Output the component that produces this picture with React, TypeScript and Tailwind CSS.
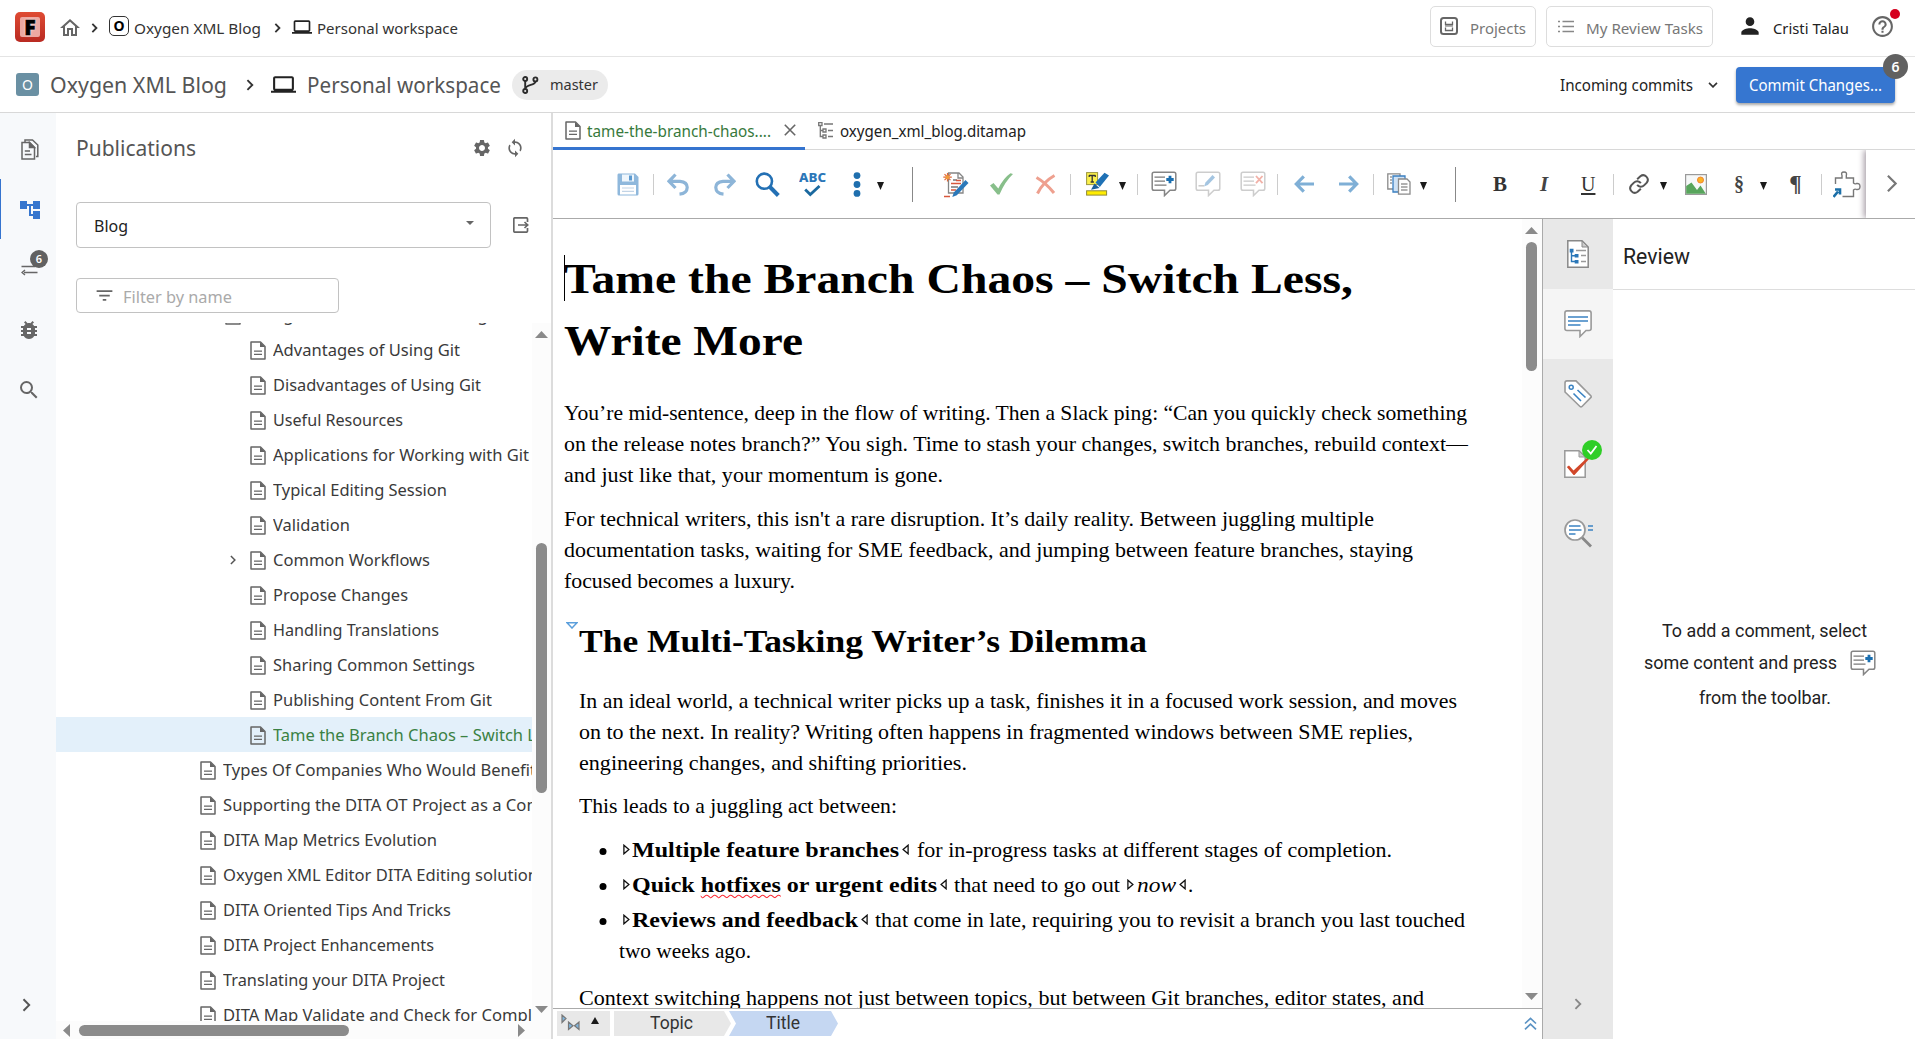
import { useLayoutEffect, useRef, type ReactNode } from "react";
import {
  MdAccountTree,
  MdBugReport,
  MdFilterList,
  MdHelpOutline,
  MdOutlineHome,
  MdLaptop,
  MdPerson,
  MdSearch,
  MdSettings,
  MdSync,
} from "react-icons/md";

/** A single line of text, condensed or expanded to occupy exactly `w` pixels. */
function Fit({ w, className = "", children }: { w: number; className?: string; children: ReactNode }) {
  const inner = useRef<HTMLSpanElement>(null);
  useLayoutEffect(() => {
    const el = inner.current;
    if (!el) return;
    el.style.transform = "none";
    const natural = el.getBoundingClientRect().width;
    if (natural > 0) el.style.transform = `scaleX(${w / natural})`;
  }, [w]);
  return (
    <span className={`inline-block shrink-0 whitespace-nowrap ${className}`} style={{ width: w }}>
      <span ref={inner} className="inline-block origin-left">
        {children}
      </span>
    </span>
  );
}

function Chevron({ className, dir = "right", sw = 2 }: { className: string; dir?: "right" | "down"; sw?: number }) {
  return (
    <svg className={`shrink-0 ${className}`} viewBox={dir === "right" ? "0 0 8 13" : "0 0 13 8"} fill="none" stroke="currentColor" strokeWidth={sw}>
      <path d={dir === "right" ? "M1.2 1.2 6.5 6.5 1.2 11.8" : "M1.2 1.2 6.5 6.5 11.8 1.2"} />
    </svg>
  );
}

function DocIcon({ className = "" }: { className?: string }) {
  return (
    <svg className={`h-[19px] w-[16px] shrink-0 text-[#666] ${className}`} viewBox="0 0 16 19" fill="none" stroke="currentColor" strokeWidth="1.5">
      <path d="M1 1H10.5L15 5.5V18H1Z" strokeLinejoin="round" />
      <path d="M10 1V6H15Z" fill="currentColor" stroke="none" />
      <path d="M4 10.2H12M4 13.4H12" strokeWidth="1.3" />
    </svg>
  );
}

function FilesIcon() {
  return (
    <svg className="h-[21px] w-[18px]" viewBox="0 0 18 21" fill="none" stroke="#666" strokeWidth="1.5">
      <path d="M1 3.5H8.5L13.5 8.5V20H1Z" />
      <path d="M8.5 3.5V8.5H13.5Z" fill="#666" />
      <path d="M3.8 12H9M3.8 15.5H10.5" strokeWidth="1.3" />
      <path d="M4 3V1H11.5L16.8 6V17.5H15" />
    </svg>
  );
}

function BranchIcon() {
  return (
    <svg className="h-[18px] w-[17px]" viewBox="0 0 17 18" fill="none" stroke="#2b2b2b" strokeWidth="1.9">
      <circle cx="3.2" cy="3" r="2" />
      <circle cx="13.4" cy="3.4" r="2" />
      <circle cx="3.2" cy="15" r="2" />
      <path d="M3.2 5V13M13.4 5.4C13.4 9.6 3.6 8 3.2 13" />
    </svg>
  );
}

function Bubble({ kind, soft = false }: { kind: "plus" | "edit" | "del"; soft?: boolean }) {
  return (
    <svg className={soft ? "h-[26px] w-[26px] opacity-40" : "h-[26px] w-[26px]"} viewBox="0 0 26 26" fill="none">
      <path d="M3 1.2H23Q24.8 1.2 24.8 3V17.5Q24.8 19.3 23 19.3H19L13.5 24.6V19.3H3Q1.2 19.3 1.2 17.5V3Q1.2 1.2 3 1.2Z" stroke="#858585" strokeWidth="1.5" fill="#fff" />
      {kind !== "edit" && <path d="M3.5 6.2H14M3.5 10.2H14M3.5 14.2H15.5" stroke="#7a7a7a" strokeWidth="1.3" />}
      {kind === "edit" && <path d="M3.5 14.8H9" stroke="#7a7a7a" strokeWidth="1.5" />}
      {kind === "plus" && <path d="M19 4.8V12.2M15.3 8.5H22.7" stroke="#1b6fb0" strokeWidth="2.8" />}
      {kind === "edit" && <path d="M9 15.5 10.5 11.5 17.5 4 20 6.5 12.8 14Z" fill="#1f71b5" />}
      {kind === "del" && <path d="M16 5 22.5 12.2M22.5 5 16 12.2" stroke="#df3f27" strokeWidth="1.8" />}
    </svg>
  );
}

const Sep = ({ className }: { className: string }) => <div className={`h-[21px] w-px shrink-0 bg-[#ccc] ${className}`} />;
const BigSep = ({ className }: { className: string }) => <div className={`h-[35px] w-px shrink-0 bg-[#888] ${className}`} />;
const Caret = ({ className }: { className: string }) => (
  <svg className={`mt-1 h-2 w-[7px] shrink-0 ${className}`} viewBox="0 0 7 8">
    <path d="M0 0H7L3.5 8Z" fill="#1a1a1a" />
  </svg>
);

function Toolbar() {
  return (
    <div className="flex h-[69px] shrink-0 items-center overflow-hidden border-b border-[#aaa] bg-white">
      <svg className="ml-16 h-[23px] w-[22px] shrink-0" viewBox="0 0 22 23">
        <path d="M1.5.5H18L21.5 4V21Q21.5 22.5 20 22.5H2Q.5 22.5 .5 21V2Q.5.5 1.5.5Z" fill="#8fb8dc" />
        <rect x="5" y="1.5" width="12" height="7" fill="#eff6fc" />
        <rect x="12" y="2.5" width="3" height="5" fill="#5c9ad0" />
        <rect x="3" y="12" width="16" height="9.5" fill="#fff" />
        <path d="M5 15H17M5 18.3H17" stroke="#c2d4e6" strokeWidth="1.2" />
      </svg>
      <Sep className="ml-[14px]" />
      <svg className="ml-[13px] h-[23px] w-[22px] shrink-0" viewBox="0 0 22 23" fill="none" stroke="#8db5d8" strokeWidth="3.2">
        <path d="M8.5 1.5 2 8.3 8.5 15M2.5 8.3H13Q20.3 9 20.2 14.5 20 20.5 12.5 21.2" />
      </svg>
      <svg className="ml-[25px] h-[23px] w-[22px] shrink-0 -scale-x-100" viewBox="0 0 22 23" fill="none" stroke="#8db5d8" strokeWidth="3.2">
        <path d="M8.5 1.5 2 8.3 8.5 15M2.5 8.3H13Q20.3 9 20.2 14.5 20 20.5 12.5 21.2" />
      </svg>
      <svg className="ml-[19px] h-[25px] w-[25px] shrink-0" viewBox="0 0 25 25" fill="none" stroke="#2370b4">
        <circle cx="9.4" cy="9.2" r="7.6" strokeWidth="2.6" />
        <path d="M15 15 23.3 23.5" strokeWidth="4" />
      </svg>
      <div className="ml-[18px] flex w-7 shrink-0 flex-col items-center">
        <Fit w={27} className="font-['Noto_Sans'] text-[12.5px] leading-[12px] font-extrabold text-[#2b76b8]">ABC</Fit>
        <svg className="mt-px h-[12px] w-[17px]" viewBox="0 0 17 12" fill="none" stroke="#1b699f" strokeWidth="2.8">
          <path d="M1.2 4.6 6.3 9.6 15.5 1" />
        </svg>
      </div>
      <svg className="ml-[27px] h-[25px] w-2 shrink-0" viewBox="0 0 8 25" fill="#1f6fae">
        <circle cx="4" cy="3.6" r="3.4" />
        <circle cx="4" cy="12.5" r="3.4" />
        <circle cx="4" cy="21.4" r="3.4" />
      </svg>
      <Caret className="ml-4" />
      <BigSep className="ml-7" />

      <svg className="ml-[30px] h-[27px] w-[26px] shrink-0" viewBox="0 0 26 27" fill="none">
        <path d="M5.5 2H16L20 6V22H5.5Z" stroke="#858585" strokeWidth="1.3" fill="#fff" />
        <path d="M15 2V7H20" stroke="#858585" strokeWidth="1.3" />
        <path d="M10 9H14M8 16H15" stroke="#777" strokeWidth="1.4" />
        <path d="M13 9.5H18M8 12.5H18M8 19H13M1 25.5H7" stroke="#d8573c" strokeWidth="1.6" />
        <path d="M4.5 2V10.5M.3 6.2H8.8M1.5 3.2 7.5 9.2M7.5 3.2 1.5 9.2" stroke="#e0683a" strokeWidth="1.2" />
        <circle cx="4.5" cy="6.2" r="2" fill="#f09a3a" />
        <path d="M9.3 26 10.8 21.5 22.5 9 25.5 12 13.8 24.3Z" fill="#2b78b9" />
      </svg>
      <svg className="ml-[21px] h-[22px] w-[23px] shrink-0" viewBox="0 0 23 22">
        <path d="M0 12.5 3.5 10 8.3 15.5Q13.5 5 20.5.3L23 1Q15 8.500 9.500 21.500H7.500Z" fill="#88bf8b" />
      </svg>
      <svg className="ml-[22px] h-[21px] w-[21px] shrink-0" viewBox="0 0 21 21" fill="none" stroke="#eea08f">
        <path d="M1.500 3.500Q11 9 19 19" strokeWidth="3" />
        <path d="M19.500 1.500Q8 8 2.500 19.500" strokeWidth="3" />
      </svg>
      <Sep className="ml-[14px]" />
      <svg className="ml-[15px] h-6 w-[23px] shrink-0" viewBox="0 0 23 24">
        <rect x=".6" y=".6" width="11" height="12" fill="#fbf04b" stroke="#9b9640" />
        <path d="M3 3.500H9.500M6.200 3.500V10M4.600 10H7.900M3.200 3.200V5M9.300 3.200V5" stroke="#333" strokeWidth="1.300" />
        <path d="M5 17.800 8.500 11.500 13.500 16Z" fill="#1a5f9b" />
        <path d="M9.500 10.500 18.500.800 23 3.500 13.800 15Z" fill="#1f71b5" />
        <rect x=".6" y="18.800" width="20" height="4.300" fill="#ffec00" stroke="#8f8a3a" />
      </svg>
      <Caret className="ml-[10px]" />
      <Sep className="ml-[11px]" />
      <div className="ml-[13px] shrink-0"><Bubble kind="plus" /></div>
      <div className="ml-[18px] shrink-0"><Bubble kind="edit" soft /></div>
      <div className="ml-[19px] shrink-0"><Bubble kind="del" soft /></div>
      <Sep className="ml-[11px]" />
      <svg className="ml-4 h-[18px] w-5 shrink-0" viewBox="0 0 20 18" fill="none" stroke="#7fafd6" strokeWidth="3.200">
        <path d="M9.800 1.300 2.300 9 9.800 16.700M2.500 9H20" />
      </svg>
      <svg className="ml-[25px] h-[18px] w-5 shrink-0" viewBox="0 0 20 18" fill="none" stroke="#7fafd6" strokeWidth="3.200">
        <path d="M10.200 1.300 17.700 9 10.200 16.700M17.500 9H0" />
      </svg>
      <Sep className="ml-[14px]" />
      <svg className="ml-[13px] h-[22px] w-6 shrink-0" viewBox="0 0 24 22" fill="#fff" strokeWidth="1.300">
        <path d="M.8.800H13V16H.8Z" stroke="#8a8a8a" />
        <path d="M3 4H5M3 7H5M3 10H5" stroke="#999" />
        <path d="M6 3H18V19H6Z" fill="#cfe2f5" stroke="#3a7fc0" />
        <path d="M11.500 6H20L23 9V21.200H11.500Z" stroke="#8a8a8a" />
        <path d="M14 11H20.500M14 14H20.500M14 17H20.500" stroke="#999" />
      </svg>
      <Caret className="ml-[9px]" />
      <BigSep className="ml-7" />

      <span className="ml-[37px] w-[14px] shrink-0 text-center font-['Liberation_Serif'] text-[21px] leading-6 font-bold text-[#333]">B</span>
      <span className="ml-[30px] w-[14px] shrink-0 text-center font-['Liberation_Serif'] text-[21px] leading-6 font-bold italic text-[#444]">I</span>
      <span className="ml-[30px] w-[14px] shrink-0 text-center font-['Liberation_Serif'] text-[20px] leading-6 text-[#333] underline underline-offset-2">U</span>
      <Sep className="ml-[18px]" />
      <svg className="ml-[14px] h-[22px] w-[22px] shrink-0" viewBox="0 0 24 24" fill="none" stroke="#555" strokeWidth="2.200">
        <path d="M10 13a5 5 0 0 0 7.500.500l3-3a5 5 0 0 0-7-7l-3.500 3.300" />
        <path d="M14 11a5 5 0 0 0-7.500-.500l-3 3a5 5 0 0 0 7 7l3.500-3.300" />
      </svg>
      <Caret className="ml-[10px]" />
      <svg className="ml-[18px] h-[21px] w-[22px] shrink-0" viewBox="0 0 22 21">
        <rect x=".6" y=".6" width="20.800" height="19.800" fill="#f6f8f8" stroke="#9a9a9a" strokeWidth="1.200" />
        <circle cx="15.500" cy="6" r="3" fill="#fbb324" stroke="#f08530" />
        <path d="M1.200 12 6.500 8.500 12 16 15.500 11.500 20.800 19.800H1.200Z" fill="#58a55c" />
      </svg>
      <span className="ml-[26px] w-3 shrink-0 text-center font-['Liberation_Serif'] text-[20px] leading-6 font-bold text-[#444]">§</span>
      <Caret className="ml-[15px]" />
      <span className="ml-[22px] w-[13px] shrink-0 text-center font-['Liberation_Serif'] text-[23px] leading-6 font-bold text-[#444]">¶</span>
      <Sep className="ml-[19px]" />
      <svg className="ml-[11px] h-[27px] w-7 shrink-0" viewBox="0 0 28 27" fill="none" stroke="#777" strokeWidth="1.400">
        <path d="M2.500 13V7H9V4.500Q7.600 1 11 1T13.300 4.500V7H20.500V12Q22 13.500 23.500 12.500 27 12 27 15.500T23.500 18.500Q22 17.500 20.500 19V25.500H9.500" />
        <path d="M.5 26 5 20.500M2 18.500H7V23.500" stroke="#1b6fa8" strokeWidth="2.600" />
      </svg>
      <div className="ml-[5px] flex h-[68px] w-[49px] shrink-0 items-center bg-white pl-[20px] shadow-[-2px_0_6px_#a79ea7]">
        <Chevron className="-mt-0.5 h-[19px] w-[12px] text-[#777]" sw={1.500} />
      </div>
    </div>
  );
}

type Row = { level: 1 | 2 | 3; text: string; w: number; expandable?: boolean; selected?: boolean };
const ROWS: Row[] = [
  { level: 2, text: "Using Git for Technical Writing", w: 240 },
  { level: 3, text: "Advantages of Using Git", w: 187 },
  { level: 3, text: "Disadvantages of Using Git", w: 208 },
  { level: 3, text: "Useful Resources", w: 130 },
  { level: 3, text: "Applications for Working with Git", w: 256 },
  { level: 3, text: "Typical Editing Session", w: 174 },
  { level: 3, text: "Validation", w: 77 },
  { level: 3, text: "Common Workflows", w: 157, expandable: true },
  { level: 3, text: "Propose Changes", w: 135 },
  { level: 3, text: "Handling Translations", w: 166 },
  { level: 3, text: "Sharing Common Settings", w: 202 },
  { level: 3, text: "Publishing Content From Git", w: 219 },
  { level: 3, text: "Tame the Branch Chaos – Switch L", w: 263, selected: true },
  { level: 1, text: "Types Of Companies Who Would Benefit", w: 313 },
  { level: 1, text: "Supporting the DITA OT Project as a Com", w: 319 },
  { level: 1, text: "DITA Map Metrics Evolution", w: 214 },
  { level: 1, text: "Oxygen XML Editor DITA Editing solution", w: 315 },
  { level: 1, text: "DITA Oriented Tips And Tricks", w: 228 },
  { level: 1, text: "DITA Project Enhancements", w: 211 },
  { level: 1, text: "Translating your DITA Project", w: 222 },
  { level: 1, text: "DITA Map Validate and Check for Compl", w: 309 },
];
const INDENT = { 1: "pl-[144px]", 2: "pl-[169px]", 3: "pl-[170px]" };

function TreeRow({ row }: { row: Row }) {
  return (
    <div className={`flex h-[35px] items-center ${INDENT[row.level]} ${row.selected ? "bg-[#e3f0fa]" : ""}`}>
      {row.level === 3 && (
        <div className="flex w-6 shrink-0 justify-start">{row.expandable && <Chevron className="ml-[4px] h-[10px] w-[6px] text-[#555]" />}</div>
      )}
      <DocIcon className="mt-0.5" />
      <Fit w={row.w} className={`mt-0.5 ml-[7px] text-[16.5px] ${row.selected ? "text-[#3a8143]" : "text-[#3a3a3a]"}`}>
        {row.text}
      </Fit>
    </div>
  );
}

function Arrow({ d, className }: { d: string; className: string }) {
  return (
    <svg className={`shrink-0 ${className}`} viewBox="0 0 14 14" preserveAspectRatio="none">
      <path d={d} fill="#8a8a8a" />
    </svg>
  );
}

function Publications() {
  return (
    <section className="flex w-[495px] shrink-0 flex-col bg-white">
      <div className="flex h-[70px] shrink-0 items-center pl-[20px]">
        <Fit w={120} className="mt-0.5 text-[21px] text-[#555]">Publications</Fit>
        <MdSettings className="ml-[276px] size-5 text-[#666]" />
        <MdSync className="ml-[13px] size-5 text-[#666]" />
      </div>
      <div className="mt-[19px] flex items-center pl-5">
        <div className="flex h-[46px] w-[415px] items-center rounded-[4px] border border-[#c2c2c2] pl-[17px] pr-4">
          <Fit w={34} className="mt-0.5 text-[16px] text-[#222]">Blog</Fit>
          <svg className="mb-1 ml-auto h-1 w-2" viewBox="0 0 8 4"><path d="M0 0H8L4 4Z" fill="#666" /></svg>
        </div>
        <svg className="ml-[22px] h-4 w-4" viewBox="0 0 16 16" fill="none" stroke="#666" strokeWidth="1.700">
          <path d="M14.500 5V2Q14.500.800 13.300.800H2Q.8.800.8 2V14Q.8 15.200 2 15.200H13.300Q14.500 15.200 14.500 14V11" />
          <path d="M5 8H14.500M11.500 5 14.700 8 11.500 11" />
        </svg>
      </div>
      <div className="mt-[30px] ml-5 flex h-[35px] w-[263px] shrink-0 items-center rounded-[4px] border border-[#c2c2c2] pl-[17px]">
        <MdFilterList className="mb-px size-[21px] text-[#666]" />
        <Fit w={109} className="mt-0.5 ml-[8px] text-[16px] text-[#aaa]">Filter by name</Fit>
      </div>
      <div className="mt-[10px] flex h-[698px] shrink-0">
        <div className="flex w-[476px] flex-col overflow-hidden">
          <div className="-mt-[26px]">
            {ROWS.map((row) => (
              <TreeRow key={row.text} row={row} />
            ))}
          </div>
        </div>
        <div className="flex w-[19px] flex-col items-center bg-[#fcfcfc] pt-2">
          <Arrow d="M7 0 14 14H0Z" className="h-[7px] w-[13px]" />
          <div className="mt-[205px] h-[250px] w-[11px] rounded-full bg-[#8b8b8b]" />
          <Arrow d="M0 0H14L7 14Z" className="mt-[213px] h-[7px] w-[13px]" />
        </div>
      </div>
      <div className="flex h-[18px] items-center bg-[#fcfcfc] pl-[7px]">
        <Arrow d="M14 0V14L0 7Z" className="h-[13px] w-[7px]" />
        <div className="ml-[9px] h-[11px] w-[270px] rounded-full bg-[#8b8b8b]" />
        <Arrow d="M0 0 14 7 0 14Z" className="ml-[169px] h-[13px] w-[7px]" />
      </div>
    </section>
  );
}

function Rail() {
  return (
    <nav className="flex w-14 shrink-0 flex-col bg-[#f7f9fb] pt-[6px]">
      <div className="flex h-[60px] items-center pl-[21px]"><FilesIcon /></div>
      <div className="flex h-[60px] items-center border-l border-[#3574cf] pl-[17px]">
        <MdAccountTree className="mt-0.5 size-6 text-[#3676ce]" />
      </div>
      <div className="relative flex h-[60px] items-center pl-[21px]">
        <svg className="h-[13px] w-[17px]" viewBox="0 0 17 13" fill="none" stroke="#666" strokeWidth="1.400">
          <path d="M.5 3.500H14M3 9.500H16.500M4 7 1 9.500 4 12" />
        </svg>
        <span className="absolute top-[11px] left-[30px] flex size-[18px] items-center justify-center rounded-full bg-[#616161] text-[11px] font-semibold text-white">6</span>
      </div>
      <div className="flex h-[60px] items-center pl-[17px]"><MdBugReport className="mt-0.5 size-[24px] text-[#666]" /></div>
      <div className="flex h-[60px] items-center pl-[17px]"><MdSearch className="mt-0.5 size-6 text-[#666]" /></div>
      <div className="mt-auto flex h-[34px] items-center self-start pb-[12px] pl-[22px] mb-[11px]">
        <Chevron className="h-[14px] w-[9px] text-[#555]" sw={1.800} />
      </div>
    </nav>
  );
}

function Header() {
  return (
    <header className="flex h-[57px] shrink-0 items-center border-b border-[#e4e4e4] pl-[15px] text-[15px] text-[#333]">
      <div className="mb-0.5 flex size-[30px] items-center justify-center rounded-[5px] bg-linear-to-b from-[#df4b33] to-[#b92a22]">
        <div className="flex size-[20px] items-center justify-center rounded-[2px] bg-[#eda9a2] font-['Noto_Sans'] text-[21px] leading-none font-black text-black">
          <span className="[text-shadow:0_0_3px_white] [-webkit-text-stroke:0.6px_black]">F</span>
        </div>
      </div>
      <MdOutlineHome className="ml-[13px] size-6 text-[#666]" />
      <Chevron className="ml-[9px] h-[10px] w-[7px]" sw={2.4} />
      <div className="mb-1 ml-[11px] flex h-5 w-5 items-center justify-center rounded-[5px] border-[1.5px] border-[#333] text-[14px] leading-none font-bold text-black">O</div>
      <Fit w={127} className="ml-[5px]">Oxygen XML Blog</Fit>
      <Chevron className="ml-[13px] h-[10px] w-[7px]" sw={2.4} />
      <MdLaptop className="ml-[11px] mb-0.5 size-5 text-[#222]" />
      <Fit w={141} className="ml-[5px]">Personal workspace</Fit>

      <div className="mb-1 ml-auto flex h-[41px] w-[106px] items-center rounded-[5px] border border-[#ddd] pl-[9px] text-[#777]">
        <svg className="size-[18px]" viewBox="0 0 18 18" fill="none" stroke="#666" strokeWidth="2">
          <rect x="1" y="1" width="16" height="16" rx="2.500" />
          <path d="M5.500 4.500V7.500H12.500V4.500M5.500 10.500V13.500H12.500V10.500" strokeWidth="1.300" />
          <path d="M5 9H13" strokeWidth="1" />
        </svg>
        <Fit w={56} className="mt-1 ml-3">Projects</Fit>
      </div>
      <div className="mb-1 ml-[10px] flex h-[41px] w-[167px] items-center rounded-[5px] border border-[#ddd] pl-[11px] text-[#777]">
        <svg className="h-[13px] w-4" viewBox="0 0 16 13" stroke="#888" strokeWidth="1.600">
          <path d="M0 1.500H2M0 6.500H2M0 11.500H2M4.500 1.500H16M4.500 6.500H16M4.500 11.500H16" />
        </svg>
        <Fit w={117} className="mt-1 ml-3">My Review Tasks</Fit>
      </div>
      <MdPerson className="mb-1 ml-[24px] size-[26px] text-[#222]" />
      <Fit w={76} className="ml-[10px] text-[#222]">Cristi Talau</Fit>
      <div className="relative mr-[20px] mb-1 ml-[21px]">
        <MdHelpOutline className="size-[25px] text-[#666]" />
        <span className="absolute -top-[5px] left-[20px] size-[10px] rounded-full bg-[#d5001e]" />
      </div>
    </header>
  );
}

function ProjectBar() {
  return (
    <div className="flex h-14 shrink-0 items-center border-b border-[#d8d8d8] pl-[16px] text-[21px] text-[#555]">
      <div className="flex size-[23px] items-center justify-center rounded-[3px] bg-[#6a90a3] text-[14px] leading-none text-white">O</div>
      <Fit w={177} className="mt-0.5 ml-[11px]">Oxygen XML Blog</Fit>
      <Chevron className="ml-[19px] h-[12px] w-[8px] text-[#333]" />
      <MdLaptop className="ml-[17px] size-[25px] text-[#222]" />
      <Fit w={194} className="mt-0.5 ml-[11px]">Personal workspace</Fit>
      <div className="ml-[11px] flex h-[30px] w-[96px] items-center rounded-full bg-[#ebebeb] pl-[10px] text-[15px] text-[#333]">
        <BranchIcon />
        <Fit w={48} className="ml-[11px]">master</Fit>
      </div>
      <Fit w={133} className="mt-0.5 ml-auto text-[15.500px] text-[#222]">Incoming commits</Fit>
      <Chevron dir="down" className="ml-[15px] h-[6px] w-[10px] text-[#333]" sw={2.200} />
      <div className="relative mr-5 ml-[18px] flex h-9 w-[159px] items-center justify-center rounded-[4px] bg-[#3676d0] text-[15.500px] text-white shadow-[0_2px_3px_rgba(0,0,0,0.35)]">
        <Fit w={133} className="mt-0.5">Commit Changes...</Fit>
        <span className="absolute -top-[13px] -right-[13px] flex size-[25px] items-center justify-center rounded-full bg-[#616161] text-[14px] font-semibold">6</span>
      </div>
    </div>
  );
}

function Tabs() {
  return (
    <div className="flex h-[37px] shrink-0 border-b border-[#d8d8d8] text-[15.500px]">
      <div className="-mb-px flex w-[252px] items-center border-b-[3px] border-[#3574cf] pl-3">
        <DocIcon className="mt-px" />
        <Fit w={184} className="mt-[3px] ml-[6px] text-[#37793c]">tame-the-branch-chaos....</Fit>
        <svg className="ml-[13px] size-3" viewBox="0 0 12 12" stroke="#666" strokeWidth="1.600"><path d="M.8.800 11.200 11.200M11.200.800.8 11.200" /></svg>
      </div>
      <div className="flex items-center pl-[13px]">
        <svg className="mb-0.5 h-[17px] w-[15px]" viewBox="0 0 15 17" fill="none" stroke="#777" strokeWidth="1.300">
          <path d="M.7.700H4V3.500H.7ZM2.300 3.500V14.500H5M2.300 8.500H5M5 7H8V10H5ZM5 13H8V16H5ZM6 2H15M10 8.500H15M10 14.500H15" />
        </svg>
        <Fit w={186} className="mt-px ml-[7px] text-[#222]">oxygen_xml_blog.ditamap</Fit>
      </div>
    </div>
  );
}

const Open = () => (
  <svg className="mb-[3px] h-[11px] w-[7px] shrink-0" viewBox="0 0 7 11" fill="#fff" stroke="#111" strokeWidth="1.300"><path d="M.9 1.200V9.800L5.900 5.500Z" /></svg>
);
const Close = () => (
  <svg className="mb-[3px] h-[11px] w-[7px] shrink-0" viewBox="0 0 7 11" fill="#fff" stroke="#111" strokeWidth="1.300"><path d="M6.100 1.200V9.800L1.100 5.500Z" /></svg>
);
const Dot = () => <span className="mt-[2px] mr-[16px] ml-[21px] size-[7px] shrink-0 -translate-x-[0.5px] rounded-full bg-black" />;

function Editor() {
  return (
    <div className="flex min-h-0 flex-1">
      <div className="relative w-[969px] shrink-0 overflow-hidden bg-white pt-[28.500px] pl-[11px] font-['Liberation_Serif',serif] text-[21px] leading-[31px] text-black">
        <div className="absolute top-[36px] left-[11px] h-[46px] w-px bg-black" />
        <h1 className="flex flex-col text-[42px] leading-[62px] font-bold">
          <Fit w={789}>Tame the Branch Chaos – Switch Less,</Fit>
          <Fit w={239}>Write More</Fit>
        </h1>
        <div className="mt-[26.500px] flex flex-col">
          <Fit w={903}>You’re mid-sentence, deep in the flow of writing. Then a Slack ping: “Can you quickly check something</Fit>
          <Fit w={904}>on the release notes branch?” You sigh. Time to stash your changes, switch branches, rebuild context—</Fit>
          <Fit w={379}>and just like that, your momentum is gone.</Fit>
        </div>
        <div className="mt-[12.500px] flex flex-col">
          <Fit w={810}>For technical writers, this isn't a rare disruption. It’s daily reality. Between juggling multiple</Fit>
          <Fit w={849}>documentation tasks, waiting for SME feedback, and jumping between feature branches, staying</Fit>
          <Fit w={231}>focused becomes a luxury.</Fit>
        </div>
        <div className="relative mt-[21px] pl-[15px]">
          <svg className="absolute top-[4px] left-[2px] h-[7px] w-[12px]" viewBox="0 0 12 7" fill="#fff" stroke="#5b9fdc" strokeWidth="1.500"><path d="M1 .8H11L6 6Z" /></svg>
          <h2 className="flex text-[31px] leading-[48px] font-bold"><Fit w={568}>The Multi-Tasking Writer’s Dilemma</Fit></h2>
          <div className="mt-[20px] flex flex-col">
            <Fit w={878}>In an ideal world, a technical writer picks up a task, finishes it in a focused work session, and moves</Fit>
            <Fit w={834}>on to the next. In reality? Writing often happens in fragmented windows between SME replies,</Fit>
            <Fit w={388}>engineering changes, and shifting priorities.</Fit>
          </div>
          <div className="mt-3 flex flex-col"><Fit w={318}>This leads to a juggling act between:</Fit></div>
          <ul className="mt-[13.500px] flex flex-col gap-1">
            <li className="flex items-center">
              <Dot />
              <Open />
              <Fit w={267} className="ml-[2px] font-bold">Multiple feature branches</Fit>
              <span className="ml-[3px] flex"><Close /></span>
              <Fit w={475} className="ml-[8px]">for in-progress tasks at different stages of completion.</Fit>
            </li>
            <li className="flex items-center">
              <Dot />
              <Open />
              <Fit w={305} className="ml-[2px] font-bold">
                Quick <span className="underline decoration-red-500 decoration-wavy decoration-[1px] underline-offset-[2px]">hotfixes</span> or urgent edits
              </Fit>
              <span className="ml-[3px] flex"><Close /></span>
              <Fit w={166} className="ml-[7px]">that need to go out</Fit>
              <span className="ml-[7px] flex"><Open /></span>
              <Fit w={39} className="ml-[3px] italic">now</Fit>
              <span className="ml-[3px] flex"><Close /></span>
              <span className="ml-[2px]">.</span>
            </li>
            <li className="flex flex-col">
              <div className="flex items-center">
                <Dot />
                <Open />
                <Fit w={226} className="ml-[2px] font-bold">Reviews and feedback</Fit>
                <span className="ml-[3px] flex"><Close /></span>
                <Fit w={590} className="ml-[7px]">that come in late, requiring you to revisit a branch you last touched</Fit>
              </div>
              <Fit w={132} className="ml-10">two weeks ago.</Fit>
            </li>
          </ul>
          <div className="mt-4 flex flex-col"><Fit w={845}>Context switching happens not just between topics, but between Git branches, editor states, and</Fit></div>
        </div>
      </div>
      <div className="flex w-5 shrink-0 flex-col items-center bg-[#fcfcfc] pt-2 pr-px">
        <Arrow d="M7 0 14 14H0Z" className="h-[7px] w-[13px]" />
        <div className="mt-2 h-[129px] w-[11px] rounded-full bg-[#8b8b8b]" />
        <Arrow d="M0 0H14L7 14Z" className="mt-auto mb-2 h-[7px] w-[13px]" />
      </div>
    </div>
  );
}

function Breadcrumbs() {
  return (
    <div className="flex h-[31px] shrink-0 items-start border-t border-[#aaa] pt-[2px] pl-1 font-['Roboto'] text-[18px] text-[#333]">
      <div className="flex h-[25px] w-[53px] items-start bg-[#e8e8e8] pt-[3px] pl-1">
        <svg className="h-[17px] w-[19px]" viewBox="0 0 19 17" fill="#7fb4dc" stroke="#777" strokeWidth="1.200">
          <path d="M1 1V8.500L5 4.500ZM7.500 8V15.500L12 11.700ZM18 8V15.500L13.500 11.700Z" />
        </svg>
        <svg className="mt-[3px] ml-[11px] h-[7px] w-[8px]" viewBox="0 0 8 7"><path d="M4 0 8 7H0Z" fill="#1a1a1a" /></svg>
      </div>
      <div className="ml-1 flex h-[25px] w-[117px] items-start bg-[#e8e8e8] pl-9 leading-[23px] [clip-path:polygon(0_0,110px_0,117px_50%,110px_100%,0_100%)]"><Fit w={43}>Topic</Fit></div>
      <div className="-ml-[2px] flex h-[25px] w-[109px] items-start bg-[#c5d7f2] pl-[37px] leading-[23px] [clip-path:polygon(0_0,102px_0,109px_50%,102px_100%,0_100%,7px_50%)]"><Fit w={34}>Title</Fit></div>
      <svg className="mt-[6px] mr-[5px] ml-auto h-[13px] w-[13px]" viewBox="0 0 13 13" fill="none" stroke="#5b93c4" strokeWidth="1.700"><path d="M1 6.500 6.500 1.300 12 6.500M1 12.300 6.500 7.100 12 12.300" /></svg>
    </div>
  );
}

function SideTools() {
  return (
    <div className="flex w-[71px] shrink-0 flex-col border-l border-[#aaa] bg-[#e8e8e8]">
      <div className="flex h-[70px] items-center justify-center">
        <svg className="h-[28px] w-[22px]" viewBox="0 0 22 28" fill="none">
          <path d="M.8.800H15L21.200 7V27.200H.8Z" fill="#fff" stroke="#888" strokeWidth="1.500" />
          <path d="M15 1V7H21Z" fill="#ccc" stroke="#888" />
          <path d="M9 10.500H19M14 15.500H19M14 21.500H19" stroke="#999" strokeWidth="1.400" />
          <path d="M4.500 11V21.500H9M4.500 15.700H9" stroke="#2b77b8" strokeWidth="1.400" />
          <path d="M2.700 8.700H6.500V12.500H2.700ZM7.700 14H11.500V17.500H7.700ZM7.700 20H11.500V23.500H7.700Z" fill="#2b77b8" />
        </svg>
      </div>
      <div className="flex h-[70px] items-center justify-center bg-[#f5f5f5]">
        <svg className="h-[28px] w-[28px]" viewBox="0 0 28 28" fill="none">
          <path d="M3 .9H25Q27.100.900 27.100 3V18.500Q27.100 20.500 25 20.500H22L16 26.500V20.500H3Q.9 20.500.9 18.500V3Q.9.900 3 .9Z" fill="#fff" stroke="#999" strokeWidth="1.600" />
          <path d="M4 7H24M4 11H24M4 15H16.500" stroke="#3b83c2" strokeWidth="1.500" />
        </svg>
      </div>
      <div className="flex h-[70px] items-center justify-center">
        <svg className="h-[28px] w-[28px]" viewBox="0 0 28 28" fill="none">
          <path d="M3 .9H12L27 16Q27.500 17 26.700 17.700L18 26.500Q17 27.300 16 26.500L1 12V3Q1 .9 3 .9Z" fill="#fff" stroke="#999" strokeWidth="1.600" />
          <circle cx="7.200" cy="7.200" r="2" stroke="#3b83c2" strokeWidth="1.500" />
          <path d="M13.500 10 21.500 17.500M9.500 13.500 17 21" stroke="#3b83c2" strokeWidth="1.600" />
        </svg>
      </div>
      <div className="relative flex h-[70px] items-center pl-[21px]">
        <svg className="h-[28px] w-[26px]" viewBox="0 0 26 28" fill="none">
          <path d="M.8.800H15L21.200 7V27.200H.8Z" fill="#fff" stroke="#999" strokeWidth="1.500" />
          <path d="M15 1V7H21Z" fill="#ccc" stroke="#999" />
          <path d="M2.800 17 5 15.500 9.500 20.500 24 7 25.500 8.500 10.500 25H9.500Z" fill="#d1472a" />
        </svg>
        <span className="absolute top-[11px] left-[39px] flex size-5 items-center justify-center rounded-full bg-[#2fce27]">
          <svg className="size-3" viewBox="0 0 12 12" fill="none" stroke="#fff" strokeWidth="1.800"><path d="M1.500 6 4.800 9.500 10.500 2" /></svg>
        </span>
      </div>
      <div className="flex h-[70px] items-center pl-[21px]">
        <svg className="mb-0.5 h-[29px] w-[30px]" viewBox="0 0 30 29" fill="none">
          <path d="M17.500 18 27 27.500" stroke="#888" strokeWidth="2.800" />
          <circle cx="11" cy="11" r="10" fill="#fff" stroke="#999" strokeWidth="1.700" />
          <path d="M5 7H16.500M5 11H17.500M5 15H11.500M24 7H29M24 11H29" stroke="#3b83c2" strokeWidth="1.500" />
        </svg>
      </div>
      <Chevron className="mt-auto mb-[29px] ml-[31px] h-[12px] w-[8px] text-[#888]" />
    </div>
  );
}

function Review() {
  return (
    <aside className="flex flex-1 flex-col bg-white font-['Roboto'] text-[#222]">
      <div className="flex h-[71px] shrink-0 items-center border-b border-[#ddd] pt-1.5 pl-[10px] text-[21.500px]"><Fit w={67}>Review</Fit></div>
      <div className="mt-[325px] flex flex-col items-center text-[18px] leading-8">
        <Fit w={205} className="ml-px">To add a comment, select</Fit>
        <div className="mr-[8px] flex h-8 items-center">
          <Fit w={193}>some content and press</Fit>
          <span className="ml-[13px]"><Bubble kind="plus" /></span>
        </div>
        <Fit w={132} className="mt-[3px] ml-px">from the toolbar.</Fit>
      </div>
    </aside>
  );
}

export default function App() {
  return (
    <div className="flex h-[1039px] w-[1915px] flex-col overflow-hidden bg-white font-['Noto_Sans',sans-serif]">
      <Header />
      <ProjectBar />
      <div className="flex min-h-0 flex-1">
        <Rail />
        <Publications />
        <main className="flex min-w-0 flex-1 flex-col border-l-2 border-[#dcdcdc]">
          <Tabs />
          <Toolbar />
          <div className="flex min-h-0 flex-1">
            <div className="flex w-[989px] shrink-0 flex-col">
              <Editor />
              <Breadcrumbs />
            </div>
            <SideTools />
            <Review />
          </div>
        </main>
      </div>
    </div>
  );
}
